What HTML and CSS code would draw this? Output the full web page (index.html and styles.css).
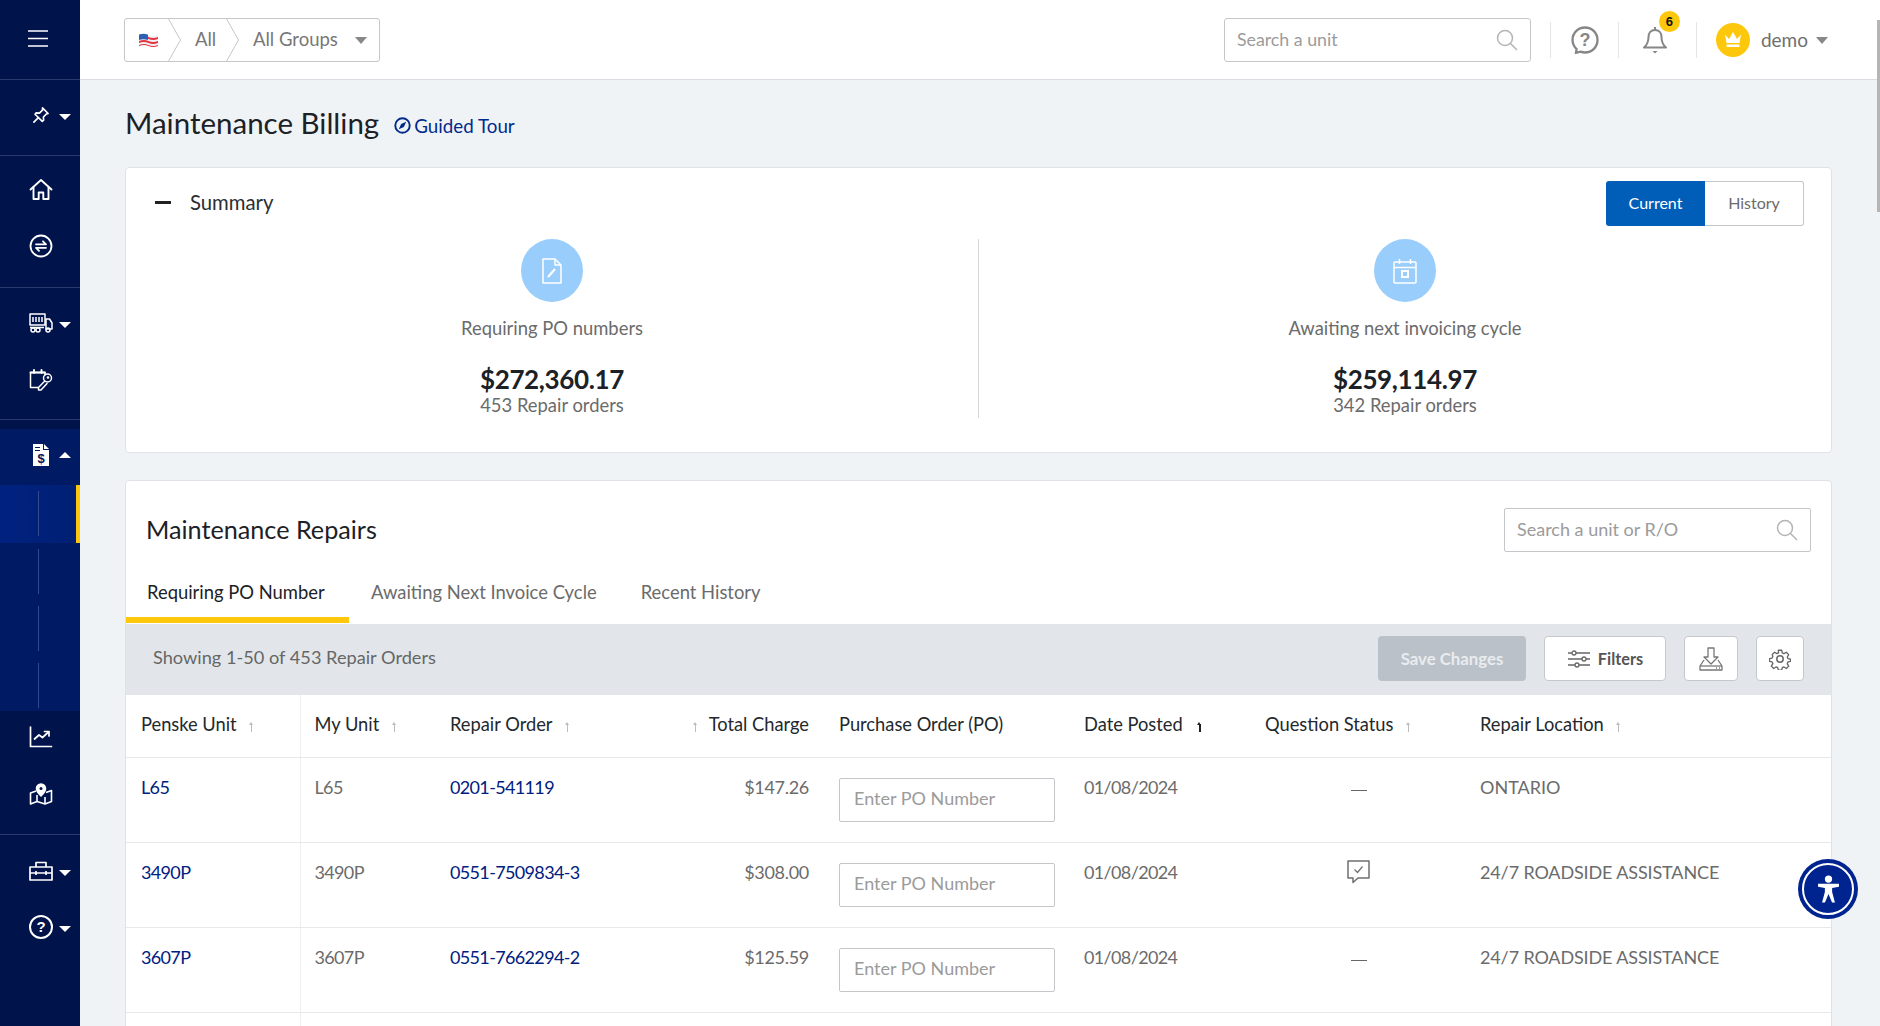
FILE: index.html
```html
<!DOCTYPE html>
<html lang="en">
<head>
<meta charset="utf-8">
<title>Maintenance Billing</title>
<link rel="stylesheet" href="styles.css">
</head>
<body>
<div class="app">
  <nav class="sidebar">
    <div class="nav-sec nav-burger">
      <svg class="ic-burger" width="20" height="18" viewBox="0 0 20 18"><path d="M0 1h20M0 8.500h20M0 16h20" stroke="#fff" stroke-width="1.300" fill="none"/></svg>
    </div>
    <div class="nav-sec nav-pin">
      <div class="nav-item">
        <svg width="18" height="18" viewBox="0 0 24 24" fill="none" stroke="#fff" stroke-width="2.200" stroke-linejoin="round" stroke-linecap="round"><path d="M14 2.500 21.500 10l-2.200.6-4.100 4.100.3 4.300-1.800 1.600L4 11l1.600-1.800 4.300.3L14 5.400z"/><path d="M8.500 15.500 2.500 21.500"/></svg>
        <span class="caret caret-w"></span>
      </div>
    </div>
    <div class="nav-sec nav-two nav-home">
      <div class="nav-item">
        <svg width="24" height="24" viewBox="0 0 24 24" fill="none" stroke="#fff" stroke-width="1.900" stroke-linejoin="round" stroke-linecap="round"><path d="M1.500 11.500 12 2l10.500 9.500"/><path d="M4.500 9.500V21h5.200v-6.500h4.600V21h5.200V9.500"/></svg>
      </div>
      <div class="nav-item">
        <svg width="24" height="24" viewBox="0 0 24 24" fill="none" stroke="#fff" stroke-width="1.800" stroke-linecap="round" stroke-linejoin="round"><circle cx="12" cy="12" r="10.500"/><path d="M7 10.300h10l-3-3M17 13.800H7l3 3"/></svg>
      </div>
    </div>
    <div class="nav-sec nav-two nav-veh">
      <div class="nav-item">
        <svg width="24" height="20" viewBox="0 0 24 20" fill="none" stroke="#fff" stroke-width="1.500" stroke-linejoin="round"><rect x="1" y="1" width="15" height="11"/><path d="M4 4v5M7 4v5M10 4v5M13 4v5M1 14.500h14"/><path d="M17 6h3.500l2.500 4v6h-6z"/><circle cx="4" cy="17" r="2"/><circle cx="9" cy="17" r="2"/><circle cx="19" cy="17" r="2"/></svg>
        <span class="caret caret-w"></span>
      </div>
      <div class="nav-item">
        <svg width="24" height="22" viewBox="0 0 24 22" fill="none" stroke="#fff" stroke-width="1.500" stroke-linecap="round" stroke-linejoin="round"><path d="M9 18.500H1.500V3.500h14.500v2.500"/><path d="M1.500 3.500h14.500M5 1v3M12.500 1v3" stroke-width="2"/><circle cx="18.500" cy="9" r="4"/><path d="M15.800 12 9.500 18.500v2.500h2.500l6-6.500"/><circle cx="19" cy="8.500" r=".6"/></svg>
      </div>
    </div>
    <div class="nav-active">
      <div class="nav-item nav-doc">
        <svg width="18" height="22" viewBox="0 0 18 22"><path d="M1 0h10v6h6v16H1z" fill="#fff"/><path d="M12 0l5 5h-5z" fill="#fff"/><path d="M3 3.500h5M3 6.500h5" stroke="#001a63" stroke-width="1.200"/><text x="9" y="19" class="doc-dollar">$</text></svg>
        <span class="caret caret-w caret-up"></span>
      </div>
      <div class="sub-item sub-on"><span class="sub-line"></span></div>
      <div class="sub-item"><span class="sub-line"></span></div>
      <div class="sub-item"><span class="sub-line"></span></div>
      <div class="sub-item sub-last"><span class="sub-line"></span></div>
    </div>
    <div class="nav-sec nav-two nav-after">
      <div class="nav-item">
        <svg width="24" height="22" viewBox="0 0 24 22" fill="none" stroke="#fff" stroke-width="1.700" stroke-linecap="round" stroke-linejoin="round"><path d="M1.500 1v19.500h21"/><path d="M5.500 13l4.500-4 3.500 2.500L19.500 6"/><path d="M15.500 5.500h4.500V10"/></svg>
      </div>
      <div class="nav-item">
        <svg width="24" height="22" viewBox="0 0 24 22" fill="none" stroke="#fff" stroke-width="1.600" stroke-linejoin="round"><path d="M7 8 1.500 10v11L8 18.500l8 2.500 6.500-2.500v-11L17 9.500"/><path d="M8 12v6.500M16 14v7"/><path d="M12 1a4.500 4.500 0 0 0-4.500 4.500c0 3 4.500 7.500 4.500 7.500s4.500-4.500 4.500-7.500A4.500 4.500 0 0 0 12 1z" fill="#fff"/><circle cx="12" cy="5.500" r="1.500" fill="#00134b" stroke="none"/></svg>
      </div>
    </div>
    <div class="nav-tools">
      <div class="nav-item">
        <svg width="24" height="20" viewBox="0 0 24 20" fill="none" stroke="#fff" stroke-width="1.700" stroke-linejoin="round"><rect x="1" y="6" width="22" height="13"/><path d="M7 6V1.500h10V6M1 12h22M7 10v4M17 10v4"/></svg>
        <span class="caret caret-w"></span>
      </div>
      <div class="nav-item">
        <span class="round-q">?</span>
        <span class="caret caret-w"></span>
      </div>
    </div>
  </nav>

  <div class="main">
    <header class="topbar">
      <div class="crumbs">
        <span class="crumb crumb-flag">
          <svg width="19" height="15" viewBox="0 0 19 15"><path d="M0 2q5-2 9.500 0T19 2v11q-5 2-9.500 0T0 13z" fill="#f1f1f4"/><path d="M0 4q5-2 9.500 0T19 4v2q-5 2-9.500 0T0 6zM0 8q5-2 9.500 0T19 8v2q-5 2-9.500 0T0 10zM0 12q5-2 9.500 0T19 12v1q-5 2-9.500 0T0 13z" fill="#e5343f"/><path d="M0 1.600q5-1.600 9 .1V7q-4.500-1.500-9 0z" fill="#2f5fb3"/></svg>
        </span>
        <svg class="chev" width="13" height="44" viewBox="0 0 13 44"><path d="M0 0 12.500 22 0 44" fill="none" stroke="#c6c6c6" stroke-width="1"/></svg>
        <span class="crumb crumb-all">All</span>
        <svg class="chev" width="13" height="44" viewBox="0 0 13 44"><path d="M0 0 12.500 22 0 44" fill="none" stroke="#c6c6c6" stroke-width="1"/></svg>
        <span class="crumb crumb-group">All Groups</span>
        <span class="caret caret-g"></span>
      </div>
      <div class="top-right">
        <div class="search search-top">
          <span>Search a unit</span>
          <svg width="22" height="22" viewBox="0 0 22 22" fill="none" stroke="#b4b4b4" stroke-width="1.500" stroke-linecap="round"><circle cx="9" cy="9" r="7.500"/><path d="M14.500 14.500 20.500 20.500"/></svg>
        </div>
        <span class="vr vr-a"></span>
        <svg class="ic-help" width="28" height="28" viewBox="0 0 28 28" fill="none" stroke="#868686" stroke-width="2.300"><path d="M14 1.500c7 0 12.500 5.500 12.500 12.500S21 26.500 14 26.500c-2 0-3-.3-4.500-.9L5 26.800l.6-3.800A12.400 12.400 0 0 1 1.500 14C1.500 7 7 1.500 14 1.500z"/><text x="14" y="20" class="help-q">?</text></svg>
        <span class="vr vr-b"></span>
        <div class="bell">
          <svg width="24" height="28" viewBox="0 0 24 28" fill="none" stroke="#868686" stroke-width="2"><path d="M12 1v3M12 4c-4 0-6.500 3-6.500 7 0 5-1.500 8-4.500 10.500h22C20 19 18.500 16 18.500 11c0-4-2.500-7-6.500-7z" stroke-linejoin="round"/><path d="M9.500 25h5l-2.500 2.500z" fill="#868686" stroke="none"/></svg>
          <span class="badge">6</span>
        </div>
        <span class="vr vr-c"></span>
        <span class="avatar">
          <svg width="20" height="18" viewBox="0 0 20 18"><path d="M2 3.500 6 8l4-7 4 7 4-4.500L16.500 12h-13z" fill="#fff"/><rect x="3.500" y="13.500" width="13" height="2.500" fill="#fff"/></svg>
        </span>
        <span class="user">demo</span>
        <span class="caret caret-g"></span>
      </div>
    </header>

    <div class="content">
      <div class="title-row">
        <h1>Maintenance Billing</h1>
        <a class="tour">
          <svg width="17" height="17" viewBox="0 0 16 16"><circle cx="8" cy="8" r="6.800" fill="none" stroke="#002a8c" stroke-width="1.800"/><path d="M11.500 4.500 9.300 9.300 4.500 11.500 6.700 6.700z" fill="#002a8c"/></svg>
          Guided Tour
        </a>
      </div>

      <section class="card card-summary">
        <div class="sum-head">
          <div class="sum-title"><span class="minus"></span><span>Summary</span></div>
          <div class="toggle"><span class="tg tg-on">Current</span><span class="tg">History</span></div>
        </div>
        <div class="sum-body">
          <div class="stat">
            <span class="stat-ic">
              <svg width="20" height="26" viewBox="0 0 20 26" fill="none" stroke="#fff" stroke-width="1.500" stroke-linejoin="round"><path d="M1 1h12l6 6v18H1z"/><path d="M13 1v6h6"/><path d="M6 19 13 11" stroke-width="2"/></svg>
            </span>
            <div class="stat-label">Requiring PO numbers</div>
            <div class="stat-num">$272,360.17</div>
            <div class="stat-sub">453 Repair orders</div>
          </div>
          <div class="stat stat-r">
            <span class="stat-ic">
              <svg width="24" height="26" viewBox="0 0 24 26" fill="none" stroke="#fff" stroke-width="1.500"><rect x="1" y="4" width="22" height="21" rx="1"/><path d="M1 9.500h22M6.500 1v5M17.500 1v5"/><rect x="9" y="13" width="6" height="6" stroke-width="2"/></svg>
            </span>
            <div class="stat-label">Awaiting next invoicing cycle</div>
            <div class="stat-num">$259,114.97</div>
            <div class="stat-sub">342 Repair orders</div>
          </div>
        </div>
      </section>

      <section class="card card-repairs">
        <div class="rep-head">
          <h2>Maintenance Repairs</h2>
          <div class="search search-rep">
            <span>Search a unit or R/O</span>
            <svg width="22" height="22" viewBox="0 0 22 22" fill="none" stroke="#b4b4b4" stroke-width="1.500" stroke-linecap="round"><circle cx="9" cy="9" r="7.500"/><path d="M14.500 14.500 20.500 20.500"/></svg>
          </div>
        </div>
        <div class="tabs">
          <span class="tab tab-on">Requiring PO Number</span>
          <span class="tab">Awaiting Next Invoice Cycle</span>
          <span class="tab">Recent History</span>
        </div>
        <div class="toolbar">
          <span class="showing">Showing 1-50 of 453 Repair Orders</span>
          <div class="tools">
            <span class="btn btn-save">Save Changes</span>
            <span class="btn btn-filter">
              <svg width="24" height="18" viewBox="0 0 24 18" fill="none" stroke="#666" stroke-width="1.300"><path d="M1 3h4M9 3h14M1 9h14M19 9h4M1 15h7M12 15h11"/><circle cx="7" cy="3" r="2"/><circle cx="17" cy="9" r="2"/><circle cx="10" cy="15" r="2"/></svg>
              Filters
            </span>
            <span class="btn btn-ic btn-dl">
              <svg width="24" height="24" viewBox="0 0 24 24" fill="none" stroke="#777" stroke-width="1.300" stroke-linejoin="round"><path d="M9 1h6v9h4l-7 7-7-7h4z"/><path d="M5 13 1 19v4h22v-4l-4-6"/><path d="M1 19h7l4 0h11"/><path d="M17 21h1M20 21h1" stroke-width="1.500"/></svg>
            </span>
            <span class="btn btn-ic btn-gear">
              <svg width="22" height="22" viewBox="0 0 24 24" fill="none" stroke="#666" stroke-width="1.600" stroke-linejoin="round"><circle cx="12" cy="12" r="3.500"/><path d="M10 1.500h4l.7 3.200 2 .9 2.900-1.700 2.800 2.800-1.700 2.900.9 2 3.100.7v0l-.1 2.500-3 .7-.9 2-.1 0 1.800 3-2.800 2.800-2.900-1.800-2 .9-.7 3.100h-4l-.7-3.100-2-.9-2.900 1.800-2.800-2.800 1.800-3-.9-2-3.100-.7v-3.200l3.100-.7.9-2L2.600 6.700l2.800-2.800 2.900 1.700 2-.9z" transform="translate(1.100 1.100) scale(.91)"/></svg>
            </span>
          </div>
        </div>
        <table class="grid">
          <colgroup>
            <col class="c1"><col class="c2"><col class="c3"><col class="c4"><col class="c5"><col class="c6"><col class="c7"><col class="c8">
          </colgroup>
          <thead>
            <tr>
              <th class="cell-first">Penske Unit <i class="sort"></i></th>
              <th>My Unit <i class="sort"></i></th>
              <th>Repair Order <i class="sort"></i></th>
              <th class="num"><i class="sort sort-l"></i> Total Charge</th>
              <th>Purchase Order (PO)</th>
              <th>Date Posted <i class="sort sort-on"></i></th>
              <th>Question Status <i class="sort"></i></th>
              <th>Repair Location <i class="sort"></i></th>
            </tr>
          </thead>
          <tbody>
            <tr>
              <td class="cell-first d"><a>L65</a></td>
              <td class="d">L65</td>
              <td class="d"><a>0201-541119</a></td>
              <td class="num d">$147.26</td>
              <td><span class="po">Enter PO Number</span></td>
              <td class="d">01/08/2024</td>
              <td class="q"><span class="dash"></span></td>
              <td>ONTARIO</td>
            </tr>
            <tr>
              <td class="cell-first d"><a>3490P</a></td>
              <td class="d">3490P</td>
              <td class="d"><a>0551-7509834-3</a></td>
              <td class="num d">$308.00</td>
              <td><span class="po">Enter PO Number</span></td>
              <td class="d">01/08/2024</td>
              <td class="q">
                <svg width="23" height="24" viewBox="0 0 23 24" fill="none" stroke="#6f6f6f" stroke-width="1.500" stroke-linejoin="round"><path d="M1 1h21v17H11l-5 4.500V18H1z"/><path d="M7.500 9.500 10.500 12.500 15.500 6.500" stroke-width="1.200"/></svg>
              </td>
              <td class="loc">24/7 ROADSIDE ASSISTANCE</td>
            </tr>
            <tr>
              <td class="cell-first d"><a>3607P</a></td>
              <td class="d">3607P</td>
              <td class="d"><a>0551-7662294-2</a></td>
              <td class="num d">$125.59</td>
              <td><span class="po">Enter PO Number</span></td>
              <td class="d">01/08/2024</td>
              <td class="q"><span class="dash"></span></td>
              <td class="loc">24/7 ROADSIDE ASSISTANCE</td>
            </tr>
            <tr>
              <td class="cell-first">&nbsp;</td><td></td><td></td><td></td><td></td><td></td><td></td><td></td>
            </tr>
          </tbody>
        </table>
      </section>
    </div>
  </div>
</div>
<span class="thumb"></span>
<span class="a11y">
  <span class="a11y-ring">
    <svg width="23" height="29" viewBox="0 0 28 36" fill="#fff"><circle cx="14" cy="5" r="4.500"/><path d="M1 11h26v3.500l-8.500 1.500v5l3.500 13h-3.600L14 23.500 9.600 34H6l3.500-13v-5L1 14.500z"/></svg>
  </span>
</span>
</body>
</html>
```
FILE: styles.css
```css
* { box-sizing: border-box; }
html, body { margin: 0; height: 100%; overflow: hidden; }
body { font-family: Lato, "Noto Sans", "Liberation Sans", sans-serif; color: #6b6b6b; background: #f0f3f6; font-size: 17px; }
.app { display: flex; height: 1026px; overflow: hidden; }

/* sidebar */
.sidebar { width: 80px; flex: none; background: #00134b; display: flex; flex-direction: column; }
.nav-sec { border-bottom: 1px solid #2a3a6d; }
.nav-burger { height: 80px; padding: 30px 0 0 28px; }
.ic-burger { display: block; }
.nav-pin { height: 76px; padding-top: 23px; }
.nav-two { height: 132px; display: flex; flex-direction: column; }
.nav-home { padding-top: 22px; gap: 32px; }
.nav-veh { padding-top: 23px; gap: 33px; }
.nav-item { display: flex; align-items: center; height: 24px; padding-left: 29px; gap: 9px; position: relative; }
.nav-pin .nav-item { padding-left: 32px; }
.caret { flex: none; width: 0; height: 0; border-left: 6px solid transparent; border-right: 6px solid transparent; display: inline-block; }
.caret-w { border-top: 6px solid #fff; margin-top: 4px; position: absolute; left: 59px; }
.caret-up { border-top: 0; border-bottom: 6px solid #fff; margin-top: 0; }
.caret-g { border-top: 7px solid #888; }
.nav-active { margin-top: 9px; background: #001a63; height: 282px; }
.nav-doc { height: 56px; padding: 0 0 5px 32px; }
.doc-dollar { font-family: "Liberation Sans", sans-serif; font-weight: 700; font-size: 13px; text-anchor: middle; fill: #001a63; }
.sub-item { height: 57px; padding: 6px 0 0 38px; }
.sub-on { height: 58px; background: linear-gradient(90deg, #00217f, #002075); border-right: 4px solid #fdc70c; }
.sub-line { display: block; width: 1px; height: 45px; background: #33488f; }
.sub-last { height: 54px; }
.nav-after { height: 124px; padding-top: 14px; gap: 33px; }
.nav-tools { padding-top: 24px; display: flex; flex-direction: column; gap: 32px; }
.round-q { width: 24px; height: 24px; flex: none; border: 2.500px solid #fff; border-radius: 50%; color: #fff; font: 700 15px/19px "Liberation Sans", sans-serif; text-align: center; }

/* main */
.main { flex: 1; min-width: 0; }
.topbar { height: 80px; background: #fff; border-bottom: 1px solid #d9dce0; display: flex; justify-content: space-between; padding: 18px 52px 0 44px; }
.crumbs { width: 256px; height: 44px; display: flex; align-items: center; border: 1px solid #c4c6c9; border-radius: 3px; padding-left: 14px; }
.crumb { display: block; flex: none; font-size: 18.500px; color: #777; padding-bottom: 2px; }
.crumb-flag { width: 29px; height: 15px; line-height: 0; padding: 0; }
.crumb-all { padding-left: 14px; width: 45px; }
.crumb-group { padding-left: 14px; width: 116px; }
.chev { display: block; flex: none; margin-top: -1px; }
.top-right { display: flex; align-items: center; height: 44px; }
.search { display: flex; align-items: center; justify-content: space-between; height: 44px; border: 1px solid #c4c6c9; border-radius: 3px; background: #fff; padding: 0 12px; color: #9b9b9b; }
.search span { padding-bottom: 2px; }
.search-top { width: 307px; font-size: 17.800px; }
.vr { width: 1px; height: 36px; background: #e3e5e8; }
.vr-a { margin: 0 20px 0 19px; }
.ic-help { margin-right: 19px; flex: none; }
.help-q { font: 700 18px "Liberation Sans", sans-serif; text-anchor: middle; fill: #868686; stroke: none; }
.bell { position: relative; width: 24px; height: 28px; margin-left: 24px; flex: none; }
.badge { position: absolute; left: 16px; top: -15px; width: 21px; height: 21px; border-radius: 50%; background: #fdc70c; color: #111; font: 700 13px/21px "Liberation Sans", sans-serif; text-align: center; }
.vr-c { margin: 0 19px 0 29px; }
.avatar { width: 34px; height: 34px; flex: none; border-radius: 50%; background: #fdc70c; display: flex; align-items: center; justify-content: center; }
.user { margin: 0 8px 0 11px; font-size: 19px; color: #6f6f6f; padding-bottom: 1px; }

.content { padding: 0 48px 0 45px; }
.title-row { height: 87px; display: flex; align-items: center; padding-bottom: 2px; }
h1 { margin: 0; font-size: 29.500px; font-weight: 400; color: #1c2126; }
.tour { display: flex; align-items: center; gap: 3px; margin-left: 15px; padding-top: 5px; font-size: 18.800px; color: #002a8c; }
.card { background: #fff; border: 1px solid #dfe3e7; border-radius: 4px; }
.card-summary { height: 286px; padding: 13px 27px 0 29px; margin-bottom: 27px; }
.sum-head { display: flex; justify-content: space-between; height: 45px; }
.sum-title { display: flex; align-items: center; gap: 19px; font-size: 20.300px; color: #2a2e33; padding-bottom: 3px; }
.minus { width: 16px; height: 3px; background: #222; }
.toggle { display: flex; height: 45px; }
.tg { width: 99px; display: flex; align-items: center; justify-content: center; border: 1px solid #c4c6c9; border-left: 0; border-radius: 0 3px 3px 0; font-size: 16px; color: #6b6b6b; padding-bottom: 2px; }
.tg-on { background: #005eb8; color: #fff; border: 0; border-radius: 3px 0 0 3px; }
.sum-body { display: flex; margin: 13px 0 0 -29px; width: 1705px; }
.stat { flex: 1; height: 179px; display: flex; flex-direction: column; align-items: center; }
.stat-r { border-left: 1px solid #d4d7da; }
.stat-ic { width: 62px; height: 63px; flex: none; border-radius: 50%; background: #99cdfb; display: flex; align-items: center; justify-content: center; margin-bottom: 13px; }
.stat-label { font-size: 18.400px; line-height: 26px; margin-bottom: 23px; }
.stat-num { font-size: 26px; line-height: 30px; font-weight: 700; color: #1c2126; letter-spacing: -.35px; }
.stat-sub { font-size: 18.400px; line-height: 23px; }

.rep-head { display: flex; justify-content: space-between; align-items: center; height: 99px; padding: 0 20px 1px; }
h2 { margin: 0 0 3px; font-size: 25.200px; font-weight: 400; color: #1c2126; }
.search-rep { width: 307px; border-radius: 2px; font-size: 18px; }
.tabs { display: flex; height: 44px; }
.tab { padding: 0 22px; font-size: 18.400px; line-height: 24px; color: #6b6b6b; }
.tab-on { width: 223px; flex: none; padding-left: 21px; color: #1c2126; border-bottom: 6px solid #fdc70c; height: 43px; white-space: nowrap; }
.toolbar { height: 71px; background: #e2e6ea; display: flex; justify-content: space-between; align-items: center; padding: 0 27px 2px; }
.showing { font-size: 18.200px; color: #666; padding-bottom: 3px; }
.tools { display: flex; gap: 18px; height: 45px; }
.btn { display: flex; align-items: center; justify-content: center; border: 1px solid #c4c9ce; border-radius: 4px; background: #fff; font-size: 16.300px; font-weight: 700; color: #555; gap: 7px; }
.btn-save { width: 148px; background: #bac1c8; border: 0; color: #e9ecef; font-size: 16.800px; }
.btn-filter { width: 122px; }
.btn-dl { width: 54px; }
.btn-gear { width: 48px; }

.grid { width: 100%; table-layout: fixed; border-collapse: collapse; }
.c1 { width: 174px; } .c2 { width: 136px; } .c3 { width: 224px; } .c4 { width: 165px; }
.c5 { width: 245px; } .c6 { width: 181px; } .c7 { width: 215px; }
.grid th { height: 62px; font-weight: 400; text-align: left; padding: 0 14px 3px; color: #23282d; font-size: 18.300px; white-space: nowrap; border-bottom: 1px solid #e6e9ec; }
.grid td { height: 85px; vertical-align: top; padding: 17px 14px 0; border-bottom: 1px solid #e6e9ec; font-size: 18px; line-height: 24px; white-space: nowrap; }
.grid td.d { letter-spacing: -.65px; }
.grid td.num { letter-spacing: -.3px; }
.grid td.loc { letter-spacing: -.13px; }
.grid .cell-first { border-right: 1px solid #eceef0; padding-left: 15px; }
.grid a { color: #00207f; }
.grid .num { text-align: right; padding-right: 16px; }
.grid .q { text-align: center; }
.dash { display: inline-block; width: 16px; height: 1px; background: #666; vertical-align: middle; margin-top: 4px; }
.sort { display: inline-block; width: 7px; height: 10px; margin-left: 7px; position: relative; vertical-align: -1px; }
.sort::before { content: ""; position: absolute; left: 3px; top: 2px; width: 1px; height: 8px; background: #b9bcc0; }
.sort::after { content: ""; position: absolute; left: 1px; top: 0; border-left: 2.500px solid transparent; border-right: 2.500px solid transparent; border-bottom: 3px solid #b9bcc0; }
.sort-l { margin: 0 6px 0 0; }
.sort-on { margin-left: 9px; }
.sort-on::before { background: #222; width: 1.500px; }
.sort-on::after { border-bottom-color: #222; }
.po { display: block; width: 216px; height: 44px; margin-top: 3px; border: 1px solid #c4c6c9; border-radius: 2px; padding-left: 14px; line-height: 39px; font-size: 18px; color: #9b9b9b; }

.thumb { position: fixed; right: 0; top: 20px; width: 3px; height: 192px; background: #b5b5b5; }
.a11y { position: fixed; left: 1798px; top: 859px; width: 60px; height: 60px; border-radius: 50%; background: #00248f; display: flex; align-items: center; justify-content: center; }
.a11y-ring { width: 52px; height: 52px; border: 2px solid #fff; border-radius: 50%; display: flex; align-items: center; justify-content: center; }
```
